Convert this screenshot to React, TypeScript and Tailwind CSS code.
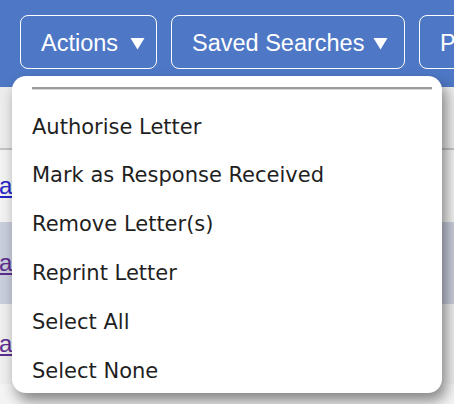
import React from "react";

const items = [
  "Authorise Letter",
  "Mark as Response Received",
  "Remove Letter(s)",
  "Reprint Letter",
  "Select All",
  "Select None",
];

function Tri() {
  return (
    <svg width="15" height="13" viewBox="0 0 15 13" className="shrink-0">
      <path d="M0.5 1 L14.5 1 L7.5 12.5 Z" fill="white" />
    </svg>
  );
}

export default function App() {
  return (
    <div className="relative w-[454px] h-[404px] overflow-hidden bg-[#f0f0f0] font-['Liberation_Sans',Arial,sans-serif]">
      {/* header */}
      <div className="h-[87px] bg-[#4e78c5] flex items-start gap-[14px] pl-[20px] pt-[15px]">
        <button className="h-[54px] w-[137px] shrink-0 rounded-[8px] border-[1.5px] border-white text-white text-[23.5px] flex items-center pl-[20px] pt-[3px]">
          Actions<span className="ml-[12px]"><Tri /></span>
        </button>
        <button className="h-[54px] w-[234px] shrink-0 rounded-[8px] border-[1.5px] border-white text-white text-[23.5px] flex items-center pl-[20px] pt-[3px]">
          Saved Searches<span className="ml-[9px]"><Tri /></span>
        </button>
        <button className="h-[54px] w-[120px] shrink-0 rounded-[8px] border-[1.5px] border-white text-white text-[23.5px] flex items-center pl-[20px] pt-[3px]">
          Print
        </button>
      </div>
      {/* table rows */}
      <div className="flex flex-col">
        <div className="h-[63px] bg-[#ececec] border-b-[2px] border-[#c4c4c4]"></div>
        <div className="h-[72px] bg-[#f2f2f2] flex items-center">
          <span className="text-[24px] text-[#2323c8] underline leading-none -ml-[1px]">a</span>
        </div>
        <div className="h-[82px] bg-[#c9cedc] flex items-center">
          <span className="text-[24px] text-[#5b2d8f] underline leading-none -ml-[1px]">a</span>
        </div>
        <div className="h-[80px] bg-[#eeeeee] flex items-center">
          <span className="text-[24px] text-[#5b2d8f] underline leading-none -ml-[1px]">a</span>
        </div>
        <div className="h-[40px] bg-[#f4f4f4]"></div>
      </div>
      {/* dropdown menu */}
      <div className="absolute left-[12px] top-[76px] w-[430px] h-[317px] bg-white rounded-[14px] shadow-[4px_8px_14px_rgba(0,0,0,0.45)] font-['DejaVu_Sans',Verdana,sans-serif]">
        <div className="mt-[11px] ml-[20px] w-[400px] h-[3px] bg-[#9c9c9c] border-b border-[#d8d8d8]"></div>
        <ul className="pt-[13px] pl-[20px] flex flex-col">
          {items.map((t) => (
            <li key={t} className="h-[48.8px] flex items-center text-[21px] text-[#1f1f1f]">
              {t}
            </li>
          ))}
        </ul>
      </div>
    </div>
  );
}
